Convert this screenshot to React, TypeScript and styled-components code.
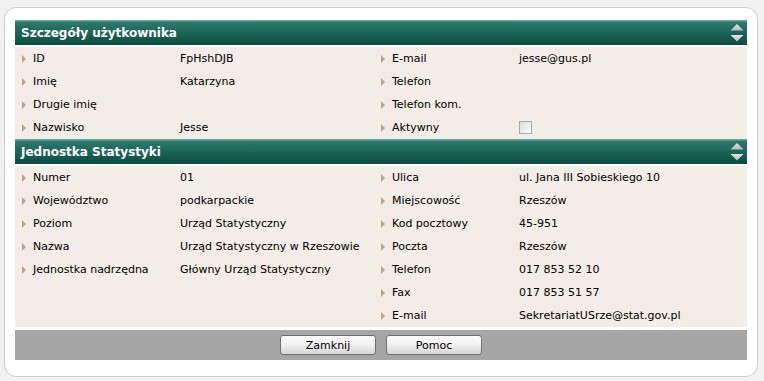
import styled, { createGlobalStyle } from "styled-components";

type Field = { label: string; value?: string; checkbox?: boolean };

type Section = {
  title: string;
  left: Field[];
  right: Field[];
};

const sections: Section[] = [
  {
    title: "Szczegóły użytkownika",
    left: [
      { label: "ID", value: "FpHshDJB" },
      { label: "Imię", value: "Katarzyna" },
      { label: "Drugie imię" },
      { label: "Nazwisko", value: "Jesse" },
    ],
    right: [
      { label: "E-mail", value: "jesse@gus.pl" },
      { label: "Telefon" },
      { label: "Telefon kom." },
      { label: "Aktywny", checkbox: true },
    ],
  },
  {
    title: "Jednostka Statystyki",
    left: [
      { label: "Numer", value: "01" },
      { label: "Województwo", value: "podkarpackie" },
      { label: "Poziom", value: "Urząd Statystyczny" },
      { label: "Nazwa", value: "Urząd Statystyczny w Rzeszowie" },
      { label: "Jednostka nadrzędna", value: "Główny Urząd Statystyczny" },
    ],
    right: [
      { label: "Ulica", value: "ul. Jana III Sobieskiego 10" },
      { label: "Miejscowość", value: "Rzeszów" },
      { label: "Kod pocztowy", value: "45-951" },
      { label: "Poczta", value: "Rzeszów" },
      { label: "Telefon", value: "017 853 52 10" },
      { label: "Fax", value: "017 853 51 57" },
      { label: "E-mail", value: "SekretariatUSrze@stat.gov.pl" },
    ],
  },
];

const SortIcon = () => (
  <svg width="14" height="20" viewBox="0 0 14 20">
    <defs>
      <linearGradient id="arr" x1="0" y1="0" x2="0" y2="1">
        <stop offset="0" stopColor="#e4e4e4" />
        <stop offset="1" stopColor="#b9b9b9" />
      </linearGradient>
    </defs>
    <polygon points="7,1 13.5,7.5 0.5,7.5" fill="url(#arr)" />
    <polygon points="0.5,12 13.5,12 7,18.5" fill="url(#arr)" />
  </svg>
);

const FieldColumn = ({ fields, labelWidth }: { fields: Field[]; labelWidth: number }) => (
  <Column>
    {fields.map((f, i) => (
      <Row key={i}>
        <Bullet />
        <Label $width={labelWidth}>{f.label}</Label>
        {f.checkbox ? <CheckBox /> : <Value>{f.value}</Value>}
      </Row>
    ))}
  </Column>
);

const App = () => {
  return (
    <>
      <GlobalStyle />
      <Card>
        {sections.map((s) => (
          <div key={s.title}>
            <Header>
              <Title>{s.title}</Title>
              <SortIcon />
            </Header>
            <Body>
              <FieldColumn fields={s.left} labelWidth={147} />
              <FieldColumn fields={s.right} labelWidth={127} />
            </Body>
          </div>
        ))}
        <Footer>
          <Button>Zamknij</Button>
          <Button>Pomoc</Button>
        </Footer>
      </Card>
    </>
  );
};

export default App;

const GlobalStyle = createGlobalStyle`
  body {
    margin: 0;
    background: #f2f2f2;
    font-family: "DejaVu Sans", Verdana, sans-serif;
    font-size: 11px;
    color: #000;
  }
`;

const Card = styled.div`
  box-sizing: border-box;
  width: 754px;
  margin: 7px 0 0 4px;
  padding: 12px 10px 16px 10px;
  background: #fff;
  border: 1px solid #cfcfcf;
  border-radius: 12px;
`;

const Header = styled.div`
  height: 25px;
  display: flex;
  align-items: center;
  justify-content: space-between;
  padding: 0 3px 0 6px;
  background: linear-gradient(#6aa89d 0, #6aa89d 1px, #2d7a6c 2px, #0b4b3f 100%);
`;

const Title = styled.span`
  color: #fff;
  font-weight: bold;
  font-size: 12px;
`;

const Body = styled.div`
  display: grid;
  grid-template-columns: 359px 1fr;
  margin-top: 2px;
  background: #f2ede7;
`;

const Column = styled.div`
  display: flex;
  flex-direction: column;
`;

const Row = styled.div`
  height: 23px;
  display: flex;
  align-items: center;
  padding-left: 7px;
`;

const Bullet = styled.span`
  width: 0;
  height: 0;
  border-top: 4px solid transparent;
  border-bottom: 4px solid transparent;
  border-left: 4px solid #b5a88f;
  margin-right: 7px;
`;

const Label = styled.span<{ $width: number }>`
  width: ${(p) => p.$width}px;
  flex-shrink: 0;
  white-space: nowrap;
`;

const Value = styled.span`
  white-space: nowrap;
`;

const CheckBox = styled.span`
  box-sizing: border-box;
  width: 13px;
  height: 13px;
  border: 1px solid #a9a9a9;
  background: linear-gradient(135deg, #dcdcdc, #fbfbfb);
`;

const Footer = styled.div`
  height: 30px;
  margin-top: 3px;
  display: flex;
  align-items: center;
  justify-content: center;
  gap: 10px;
  background: #a6a6a6;
`;

const Button = styled.button`
  box-sizing: border-box;
  width: 96px;
  height: 20px;
  padding: 0;
  font-family: "DejaVu Sans", Verdana, sans-serif;
  font-size: 11px;
  color: #000;
  border: 1px solid #6f6f6f;
  border-radius: 3px;
  background: linear-gradient(#fdfdfd, #f0f0f0 50%, #d6d6d6);
`;
